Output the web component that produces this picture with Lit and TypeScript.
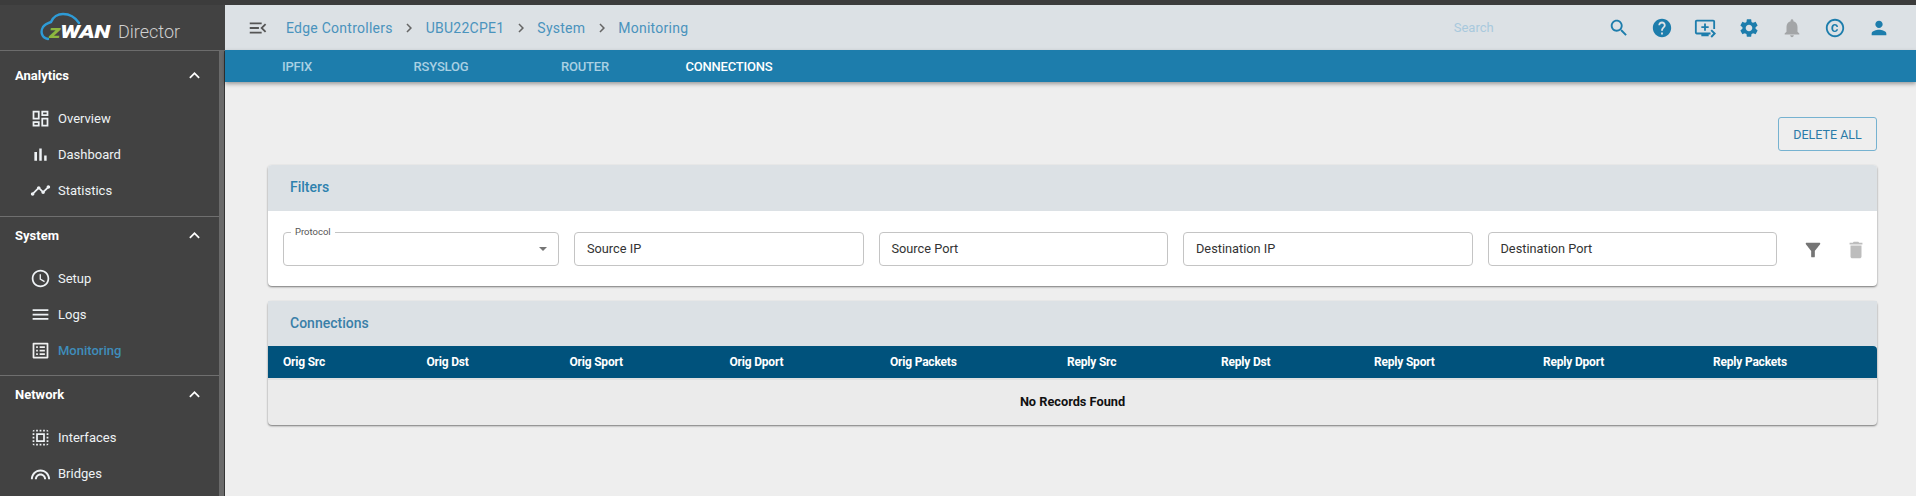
import { LitElement, html, css, svg } from 'lit';
import { customElement } from 'lit/decorators.js';
import { classMap } from 'lit/directives/class-map.js';

const ICONS: Record<string, string> = {
  search: 'M15.5 14h-.79l-.28-.27C15.41 12.59 16 11.11 16 9.5 16 5.91 13.09 3 9.5 3S3 5.91 3 9.5 5.91 16 9.5 16c1.61 0 3.09-.59 4.23-1.57l.27.28v.79l5 4.99L20.49 19l-4.99-5zm-6 0C7.01 14 5 11.99 5 9.5S7.01 5 9.5 5 14 7.01 14 9.5 11.99 14 9.5 14z',
  help: 'M12 2C6.48 2 2 6.48 2 12s4.48 10 10 10 10-4.48 10-10S17.52 2 12 2zm1 17h-2v-2h2v2zm2.07-7.75l-.9.92C13.45 12.9 13 13.5 13 15h-2v-.5c0-1.1.45-2.1 1.17-2.83l1.24-1.26c.37-.36.59-.86.59-1.41 0-1.1-.9-2-2-2s-2 .9-2 2H8c0-2.21 1.79-4 4-4s4 1.79 4 4c0 .88-.36 1.68-.93 2.25z',
  queue: 'M21 3H3c-1.11 0-2 .89-2 2v12c0 1.1.89 2 2 2h5v2h8v-2h2v-2H3V5h18v8h2V5c0-1.11-.9-2-2-2zm-8 7V7h-2v3H8v2h3v3h2v-3h3v-2h-3zm11 8l-4.5 4.5L18 21l3-3-3-3 1.5-1.5L24 18z',
  gear: 'M19.14 12.94c.04-.3.06-.61.06-.94 0-.32-.02-.64-.07-.94l2.03-1.58c.18-.14.23-.41.12-.61l-1.92-3.32c-.12-.22-.37-.29-.59-.22l-2.39.96c-.5-.38-1.03-.7-1.62-.94l-.36-2.54c-.04-.24-.24-.41-.48-.41h-3.84c-.24 0-.43.17-.47.41l-.36 2.54c-.59.24-1.13.57-1.62.94l-2.39-.96c-.22-.08-.47 0-.59.22L2.74 8.87c-.12.21-.08.47.12.61l2.03 1.58c-.05.3-.09.63-.09.94s.02.64.07.94l-2.03 1.58c-.18.14-.23.41-.12.61l1.92 3.32c.12.22.37.29.59.22l2.39-.96c.5.38 1.03.7 1.62.94l.36 2.54c.05.24.24.41.48.41h3.84c.24 0 .44-.17.47-.41l.36-2.54c.59-.24 1.13-.56 1.62-.94l2.39.96c.22.08.47 0 .59-.22l1.92-3.32c.12-.22.07-.47-.12-.61l-2.01-1.58zM12 15.6c-1.98 0-3.6-1.62-3.6-3.6s1.62-3.6 3.6-3.6 3.6 1.62 3.6 3.6-1.62 3.6-3.6 3.6z',
  bell: 'M12 22c1.1 0 2-.9 2-2h-4c0 1.1.89 2 2 2zm6-6v-5c0-3.07-1.64-5.64-4.5-6.32V4c0-.83-.67-1.5-1.5-1.5s-1.5.67-1.5 1.5v.68C7.63 5.36 6 7.92 6 11v5l-2 2v1h16v-1l-2-2z',
  copyright: 'M11.88 9.14c1.28.06 1.61 1.15 1.63 1.66h1.79c-.08-1.98-1.49-3.19-3.45-3.19C9.64 7.61 8 9 8 12.14c0 1.94.93 4.24 3.84 4.24 2.22 0 3.41-1.65 3.44-2.95h-1.79c-.03.59-.45 1.38-1.63 1.44-1.32-.04-1.86-1.07-1.86-2.73 0-2.87 1.27-2.98 1.88-3zM12 2C6.48 2 2 6.48 2 12s4.48 10 10 10 10-4.48 10-10S17.52 2 12 2zm0 18c-4.41 0-8-3.59-8-8s3.59-8 8-8 8 3.59 8 8-3.59 8-8 8z',
  person: 'M12 12c2.21 0 4-1.79 4-4s-1.79-4-4-4-4 1.79-4 4 1.79 4 4 4zm0 2c-2.67 0-8 1.34-8 4v2h16v-2c0-2.66-5.33-4-8-4z',
  filter: 'M4.25 5.61C6.27 8.2 10 13 10 13v6c0 .55.45 1 1 1h2c.55 0 1-.45 1-1v-6s3.72-4.8 5.74-7.39c.51-.66.04-1.61-.79-1.61H5.04c-.83 0-1.3.95-.79 1.61z',
  trash: 'M6 19c0 1.1.9 2 2 2h8c1.1 0 2-.9 2-2V7H6v12zM19 4h-3.5l-1-1h-5l-1 1H5v2h14V4z',
  menuOpen: 'M3 18h13v-2H3v2zm0-5h10v-2H3v2zm0-7v2h13V6H3zm18 9.59L17.42 12 21 8.41 19.59 7l-5 5 5 5L21 15.59z',
  less: 'M12 8l-6 6 1.41 1.41L12 10.83l4.59 4.58L18 14z',
  chevron: 'M10 6L8.59 7.41 13.17 12l-4.58 4.59L10 18l6-6z',
  overview: 'M19 5v2h-4V5h4M9 5v6H5V5h4m10 8v6h-4v-6h4M9 17v2H5v-2h4M21 3h-8v6h8V3zM11 3H3v10h8V3zm10 8h-8v10h8V11zm-10 4H3v6h8v-6z',
  bars: 'M5 9.2h3V19H5zM10.6 5h2.8v14h-2.8zm5.6 8H19v6h-2.8z',
  timeline: 'M23 8c0 1.1-.9 2-2 2-.18 0-.35-.02-.51-.07l-3.56 3.55c.05.16.07.34.07.52 0 1.1-.9 2-2 2s-2-.9-2-2c0-.18.02-.36.07-.52l-2.55-2.55c-.16.05-.34.07-.52.07s-.36-.02-.52-.07l-4.55 4.56c.05.16.07.33.07.51 0 1.1-.9 2-2 2s-2-.9-2-2 .9-2 2-2c.18 0 .35.02.51.07l4.56-4.55C8.02 9.36 8 9.18 8 9c0-1.1.9-2 2-2s2 .9 2 2c0 .18-.02.36-.07.52l2.55 2.55c.16-.05.34-.07.52-.07s.36.02.52.07l3.55-3.56C19.02 8.35 19 8.18 19 8c0-1.1.9-2 2-2s2 .9 2 2z',
  clock: 'M11.99 2C6.47 2 2 6.48 2 12s4.47 10 9.99 10C17.52 22 22 17.52 22 12S17.52 2 11.99 2zM12 20c-4.42 0-8-3.58-8-8s3.58-8 8-8 8 3.58 8 8-3.58 8-8 8zm.5-13H11v6l5.25 3.15.75-1.23-4.5-2.67z',
  menu: 'M3 18h18v-2H3v2zm0-5h18v-2H3v2zm0-7v2h18V6H3z',
  listAlt: 'M19 5v14H5V5h14m1.1-2H3.9c-.5 0-.9.4-.9.9v16.2c0 .4.4.9.9.9h16.2c.4 0 .9-.5.9-.9V3.9c0-.5-.5-.9-.9-.9zM11 7h6v2h-6V7zm0 4h6v2h-6v-2zm0 4h6v2h-6zM7 7h2v2H7zm0 4h2v2H7zm0 4h2v2H7z',
  selectAll: 'M3 5h2V3c-1.1 0-2 .9-2 2zm0 8h2v-2H3v2zm4 8h2v-2H7v2zM3 9h2V7H3v2zm10-6h-2v2h2V3zm6 0v2h2c0-1.1-.9-2-2-2zM5 21v-2H3c0 1.1.9 2 2 2zm-2-4h2v-2H3v2zM9 3H7v2h2V3zm2 18h2v-2h-2v2zm8-8h2v-2h-2v2zm0 8c1.1 0 2-.9 2-2h-2v2zm0-12h2V7h-2v2zm0 8h2v-2h-2v2zm-4 4h2v-2h-2v2zm0-16h2V3h-2v2zM7 17h10V7H7v10zm2-8h6v6H9V9z',
  arches: 'M1 18.5c0-6 5-11 11-11s11 5 11 11h-2.2c0-4.9-3.9-8.8-8.8-8.8s-8.8 3.9-8.8 8.8H1zm4.6 0c0-3.5 2.9-6.4 6.4-6.4s6.4 2.9 6.4 6.4h-2.2c0-2.3-1.9-4.2-4.2-4.2s-4.2 1.9-4.2 4.2H5.6z',
};

const icon = (name: string, size = 24) => html`<svg class="ico" width=${size} height=${size} viewBox="0 0 24 24" fill="currentColor">${svg`<path d=${ICONS[name]}></path>`}</svg>`;

const NAV = [
  { title: 'Analytics', first: true, items: [['overview', 'Overview'], ['bars', 'Dashboard'], ['timeline', 'Statistics']] },
  { title: 'System', items: [['clock', 'Setup'], ['menu', 'Logs'], ['listAlt', 'Monitoring']] },
  { title: 'Network', items: [['selectAll', 'Interfaces'], ['arches', 'Bridges']] },
];

const TOP_ICONS = [
  ['search', ''], ['help', ''], ['queue', ''], ['gear', ''], ['bell', 'muted'], ['copyright', ''], ['person', ''],
];

const COLUMNS = ['Orig Src', 'Orig Dst', 'Orig Sport', 'Orig Dport', 'Orig Packets', 'Reply Src', 'Reply Dst', 'Reply Sport', 'Reply Dport', 'Reply Packets'];

@customElement('app-root')
export class AppRoot extends LitElement {
  static styles = css`
    :host {
      display: block;
      height: 496px;
      overflow: hidden;
      background: #3c3c3c;
      padding-top: 5px;
      box-sizing: border-box;
      font-family: Roboto, "Liberation Sans", sans-serif;
      font-size: 13px;
    }
    * { box-sizing: border-box; }
    .ico { display: block; flex: none; }
    .shell { display: flex; height: 491px; }

    .side { width: 225px; flex: none; background: #424242; color: #f0f0f0; overflow: hidden; }
    .logo { height: 46px; display: flex; align-items: flex-end; padding: 0 0 9px 49px; position: relative; border-bottom: 1px solid #6c6c6c; }
    .logo svg { position: absolute; left: 40px; top: 7px; }
    .logo-text { display: flex; align-items: baseline; line-height: 1; white-space: nowrap; font-size: 18px; }
    .brand { display: inline-block; width: 69px; transform: scaleX(1.3); transform-origin: left center; font-weight: 900; font-style: italic; letter-spacing: -.3px; color: #fff; }
    .z { color: #8cb63f; }
    .director { color: #d0d0d0; font-weight: 300; font-size: 18px; }
    .rail { height: 445px; border-right: 1px solid #353535; padding-right: 5px; position: relative; background: #6a6a6a; }
    .rail-inner { background: #424242; height: 100%; overflow: hidden; }
    .group { border-bottom: 1px solid #6f6f6f; padding-bottom: 7px; }
    .group.first { padding-top: 6px; padding-bottom: 8px; }
    .group-head { height: 36px; display: flex; align-items: center; justify-content: space-between; padding: 0 14px 0 15px; font-weight: 700; color: #fff; }
    .items { padding-top: 7px; }
    .item { height: 36px; display: flex; align-items: center; gap: 7.5px; padding-left: 29.5px; color: #eef2f5; }
    .item.on { color: #3f8dbb; font-weight: 500; }
    .item.on .ico { color: #f0f0f0; }

    .main { flex: 1; min-width: 0; background: #eeeeee; display: flex; flex-direction: column; }
    .top { height: 45px; flex: none; background: #dce1e5; display: flex; align-items: center; padding-left: 22px; color: #555; }
    .crumbs { display: flex; align-items: center; margin-left: 17px; color: #4a93bd; font-size: 14px; letter-spacing: .25px; }
    .crumbs .ico { color: #666; margin: 0 7.5px; }
    .search { margin-left: auto; width: 154px; color: #a9c9dd; font-size: 13px; }
    .top-icons { display: flex; align-items: center; gap: 21.3px; padding-right: 26.5px; color: #1d7dac; }
    .top-icons .muted { color: #a3a5a7; }
    .tabs { height: 32px; flex: none; background: #1d7dac; display: flex; box-shadow: 0 2px 4px rgba(0, 0, 0, .35); position: relative; }
    .tab { width: 144px; display: flex; align-items: center; justify-content: center; color: #a9d0e3; font-weight: 500; font-size: 13px; letter-spacing: -.2px; }
    .tab.on { color: #fff; }

    .content { padding: 35px 39px 0 43px; }
    .actions { display: flex; justify-content: flex-end; margin-bottom: 14px; }
    .btn { width: 99px; height: 34px; border: 1px solid #76b2d0; border-radius: 3px; display: flex; align-items: center; justify-content: center; color: #2a7ba8; font-size: 12.5px; }

    .card { background: #fff; border-radius: 4px; box-shadow: 0 1px 2px rgba(0, 0, 0, .5); margin-bottom: 15px; }
    .card-head { height: 46px; background: #dce1e5; border-radius: 4px 4px 0 0; display: flex; align-items: center; padding: 0 0 2px 22px; color: #2e81ae; font-size: 14px; font-weight: 500; }
    .filters { height: 75px; padding: 21px 0 0 15px; display: flex; gap: 15px; }
    .field { width: 289.5px; height: 34px; border: 1px solid #c4c4c4; border-radius: 4px; display: flex; align-items: center; padding: 0 0 1px 12px; color: #333; font-size: 12.75px; position: relative; }
    .field.select { width: 276px; }
    .legend { position: absolute; left: 7px; top: -7px; background: #fff; padding: 0 4px; font-size: 9.5px; line-height: 12px; color: #555; }
    .caret { position: absolute; right: 11px; top: 14px; width: 0; height: 0; border: 4.5px solid transparent; border-top-color: #757575; border-bottom: 0; }
    .filter-tools { display: flex; margin-left: 10px; gap: 21px; padding-top: 7px; height: 29px; }
    .filter-tools .a { color: #757575; }
    .filter-tools .b { color: #bdbdbd; }

    .card.table { background: #ebebeb; }
    .card.table .card-head { height: 45px; border-radius: 0; color: #3a7fa8; }
    .thead { height: 32px; background: #00527c; border-radius: 0 4px 0 0; color: #fff; font-weight: 700; font-size: 12px; letter-spacing: -.2px; display: grid; grid-template-columns: 143.5px 143px 160px 160.5px 177px 154px 153px 169px 170px 1fr; align-items: center; padding-left: 15px; }
    .tbody { height: 47px; border-top: 2px solid #e0e0e0; padding-bottom: 2px; display: flex; align-items: center; justify-content: center; font-weight: 700; font-size: 12.75px; color: #111; }
  `;

  render() {
    return html`<div class="shell">
      <aside class="side">
        <div class="logo">
          <svg width="44" height="32" viewBox="0 0 44 32" fill="none">
            <path d="M8 27C2 26 0 20 3 15C5 12 8 11 11 10C13 5 18 2 23 2C29 2 35 5 39 11" stroke="#2e9bd6" stroke-width="2.4" stroke-linecap="round"></path>
          </svg>
          <div class="logo-text"><span class="brand"><span class="z">z</span>WAN</span><span class="director">Director</span></div>
        </div>
        <div class="rail"><div class="rail-inner">
          ${NAV.map(g => html`<section class=${classMap({ group: true, first: !!g.first })}>
            <div class="group-head">${g.title}${icon('less', 21)}</div>
            <div class="items">
              ${g.items.map(([ic, label]) => html`<div class=${classMap({ item: true, on: label === 'Monitoring' })}>${icon(ic, 21)}<span>${label}</span></div>`)}
            </div>
          </section>`)}
        </div></div>
      </aside>
      <main class="main">
        <header class="top">
          ${icon('menuOpen', 22)}
          <nav class="crumbs">
            <span>Edge Controllers</span>${icon('chevron', 18)}
            <span>UBU22CPE1</span>${icon('chevron', 18)}
            <span>System</span>${icon('chevron', 18)}
            <span>Monitoring</span>
          </nav>
          <div class="search">Search</div>
          <div class="top-icons">
            ${TOP_ICONS.map(([ic, cls]) => html`<span class=${cls}>${icon(ic, 22)}</span>`)}
          </div>
        </header>
        <div class="tabs">
          ${['IPFIX', 'RSYSLOG', 'ROUTER', 'CONNECTIONS'].map(t => html`<div class=${classMap({ tab: true, on: t === 'CONNECTIONS' })}>${t}</div>`)}
        </div>
        <div class="content">
          <div class="actions"><div class="btn">DELETE ALL</div></div>
          <section class="card">
            <div class="card-head">Filters</div>
            <div class="filters">
              <div class="field select"><span class="legend">Protocol</span><span class="caret"></span></div>
              <div class="field">Source IP</div>
              <div class="field">Source Port</div>
              <div class="field">Destination IP</div>
              <div class="field">Destination Port</div>
              <div class="filter-tools">
                <span class="a">${icon('filter', 22)}</span>
                <span class="b">${icon('trash', 22)}</span>
              </div>
            </div>
          </section>
          <section class="card table">
            <div class="card-head">Connections</div>
            <div class="thead">${COLUMNS.map(c => html`<span>${c}</span>`)}</div>
            <div class="tbody">No Records Found</div>
          </section>
        </div>
      </main>
    </div>`;
  }
}
